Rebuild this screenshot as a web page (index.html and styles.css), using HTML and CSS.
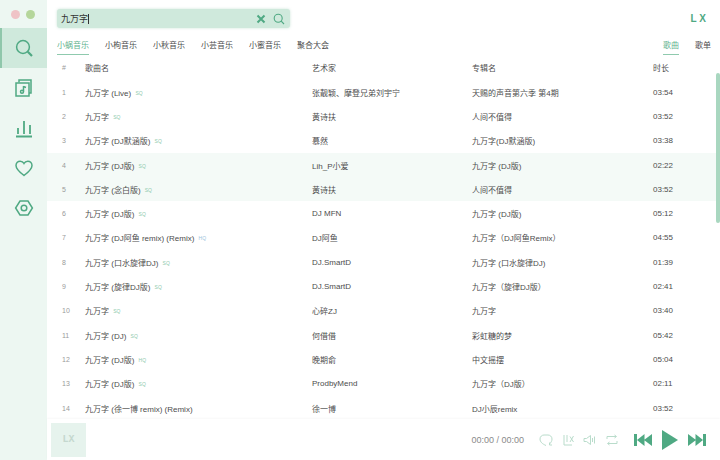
FILE: index.html
```html
<!DOCTYPE html>
<html lang="zh-CN">
<head>
    <meta charset="UTF-8">
    <title>LX Music</title>
    <link rel="stylesheet" href="styles.css">
</head>
<body>
    <div class="app">
        <aside class="sidebar">
            <div class="traffic">
                <span class="dot dot-red"></span>
                <span class="dot dot-green"></span>
            </div>
            <nav class="nav">
                <a class="nav-item active">
                    <svg viewBox="0 0 20 20" width="20" height="20"><circle cx="9" cy="9" r="6.4"/><path d="M13.8 13.8 L18 18" stroke-width="2.2"/></svg>
                </a>
                <a class="nav-item">
                    <svg viewBox="0 0 20 20" width="20" height="20"><path d="M5 4.5 V2 H17 V15 H15"/><rect x="2" y="5" width="13" height="13"/><path d="M9.5 8 V13.5 M9.5 8.5 L12 9.5"/><circle cx="8" cy="13.8" r="1.5"/></svg>
                </a>
                <a class="nav-item">
                    <svg viewBox="0 0 20 20" width="20" height="20"><path d="M2 18.5 H18 M4 16 V10 M10 16 V3 M16 16 V7" stroke-width="1.8"/></svg>
                </a>
                <a class="nav-item">
                    <svg viewBox="0 0 20 20" width="20" height="20"><path d="M10 17.5 C6 14.5 2 11.5 2 7.5 C2 4.8 4 3.2 6.2 3.2 C7.8 3.2 9.2 4 10 5.4 C10.8 4 12.2 3.2 13.8 3.2 C16 3.2 18 4.8 18 7.5 C18 11.5 14 14.5 10 17.5 Z"/></svg>
                </a>
                <a class="nav-item">
                    <svg viewBox="0 0 20 20" width="20" height="20"><path d="M6 3 H14 L18.4 10 L14 17 H6 L1.6 10 Z"/><circle cx="10" cy="10" r="2.8"/></svg>
                </a>
            </nav>
        </aside>

        <main class="main">
            <header class="topbar">
                <div class="search">
                    <span class="search-text">九万字</span>
                    <svg class="search-clear" viewBox="0 0 10 10" width="10" height="10"><path d="M1.5 1.5 L8.5 8.5 M8.5 1.5 L1.5 8.5"/></svg>
                    <svg class="search-go" viewBox="0 0 12 12" width="12" height="12"><circle cx="5.2" cy="5.2" r="4"/><path d="M8.2 8.2 L11 11"/></svg>
                </div>
                <div class="logo">L X</div>
            </header>

            <div class="tabs-row">
                <div class="tabs">
                    <span class="tab active">小蜗音乐</span>
                    <span class="tab">小枸音乐</span>
                    <span class="tab">小秋音乐</span>
                    <span class="tab">小芸音乐</span>
                    <span class="tab">小蜜音乐</span>
                    <span class="tab">聚合大会</span>
                </div>
                <div class="tabs tabs-right">
                    <span class="tab active">歌曲</span>
                    <span class="tab">歌单</span>
                </div>
            </div>

            <div class="list">
                <div class="row head">
                    <span class="num">#</span><span>歌曲名</span><span>艺术家</span><span>专辑名</span><span>时长</span>
                </div>
                <div class="row"><span class="num">1</span><span>九万字 (Live) <i class="q">SQ</i></span><span>张靓颖、摩登兄弟刘宇宁</span><span>天赐的声音第六季 第4期</span><span>03:54</span></div>
                <div class="row"><span class="num">2</span><span>九万字 <i class="q">SQ</i></span><span>黄诗扶</span><span>人间不值得</span><span>03:52</span></div>
                <div class="row"><span class="num">3</span><span>九万字 (DJ默涵版) <i class="q">SQ</i></span><span>慕然</span><span>九万字(DJ默涵版)</span><span>03:38</span></div>
                <div class="row hl"><span class="num">4</span><span>九万字 (DJ版) <i class="q">SQ</i></span><span>Lih_P小爱</span><span>九万字 (DJ版)</span><span>02:22</span></div>
                <div class="row hl"><span class="num">5</span><span>九万字 (念白版) <i class="q">SQ</i></span><span>黄诗扶</span><span>人间不值得</span><span>03:52</span></div>
                <div class="row"><span class="num">6</span><span>九万字 (DJ版) <i class="q">SQ</i></span><span>DJ MFN</span><span>九万字 (DJ版)</span><span>05:12</span></div>
                <div class="row"><span class="num">7</span><span>九万字 (DJ阿鱼 remix) (Remix) <i class="q hq">HQ</i></span><span>DJ阿鱼</span><span>九万字（DJ阿鱼Remix）</span><span>04:55</span></div>
                <div class="row"><span class="num">8</span><span>九万字 (口水旋律DJ) <i class="q">SQ</i></span><span>DJ.SmartD</span><span>九万字 (口水旋律DJ)</span><span>01:39</span></div>
                <div class="row"><span class="num">9</span><span>九万字 (旋律DJ版) <i class="q">SQ</i></span><span>DJ.SmartD</span><span>九万字（旋律DJ版）</span><span>02:41</span></div>
                <div class="row"><span class="num">10</span><span>九万字 <i class="q">SQ</i></span><span>心碎ZJ</span><span>九万字</span><span>03:40</span></div>
                <div class="row"><span class="num">11</span><span>九万字 (DJ) <i class="q">SQ</i></span><span>何借借</span><span>彩虹糖的梦</span><span>05:42</span></div>
                <div class="row"><span class="num">12</span><span>九万字 (DJ版) <i class="q">HQ</i></span><span>晚期俞</span><span>中文摇摆</span><span>05:04</span></div>
                <div class="row"><span class="num">13</span><span>九万字 (DJ版) <i class="q">SQ</i></span><span>ProdbyMend</span><span>九万字（DJ版）</span><span>02:11</span></div>
                <div class="row"><span class="num">14</span><span>九万字 (徐一博 remix) (Remix)</span><span>徐一博</span><span>DJ小辰remix</span><span>03:52</span></div>
                <div class="scrollbar"></div>
            </div>

            <footer class="player">
                <div class="cover">LX</div>
                <div class="time">00:00 / 00:00</div>
                <div class="tools">
                    <svg viewBox="0 0 14 14" width="14" height="14"><path d="M7 12.5 C3.5 11 1 9 1 6 C1 3.5 3 2 5 2 H9 C11 2 13 3.5 13 6 C13 8 12 9.5 10.5 11"/><path d="M10.5 9.5 V12 H13"/></svg>
                    <svg viewBox="0 0 14 14" width="14" height="14"><path d="M3 2 V12 H11 M6 2 V9 M9 9 L12.5 3 M9 3.5 L12.5 9"/></svg>
                    <svg viewBox="0 0 14 14" width="14" height="14"><path d="M1 5.5 V8.5 H3.5 L7.5 11.5 V2.5 L3.5 5.5 Z M9.5 5 V9 M11.5 3.5 V10.5"/></svg>
                    <svg viewBox="0 0 14 14" width="14" height="14"><path d="M2 6 V3.5 H11 M9.5 2 L11.5 3.5 L9.5 5 M12 8 V10.5 H3 M4.5 9 L2.5 10.5 L4.5 12"/></svg>
                </div>
                <div class="controls">
                    <svg viewBox="0 0 18 14" width="18" height="14"><path d="M0 1 H3 V13 H0 Z M3 7 L10.5 1 V13 Z M10 7 L18 1 V13 Z"/></svg>
                    <svg viewBox="0 0 16 20" width="16" height="20"><path d="M0 0 L16 10 L0 20 Z"/></svg>
                    <svg viewBox="0 0 18 14" width="18" height="14"><path d="M18 1 H15 V13 H18 Z M15 7 L7.5 1 V13 Z M8 7 L0 1 V13 Z"/></svg>
                </div>
            </footer>
        </main>
    </div>
</body>
</html>
```

FILE: styles.css
```css
:root {
    --green: #4fa983;
    --green-soft: #8fcaae;
    --side: #edf7f2;
    --text: #4d4d4d;
    --muted: #9a9a9a;
}

* {
    margin: 0;
    padding: 0;
    box-sizing: border-box;
}

body {
    width: 720px;
    height: 460px;
    overflow: hidden;
    font-family: "Liberation Sans", "Noto Sans CJK SC", sans-serif;
    font-size: 8px;
    color: var(--text);
    background: white;
}

.app {
    display: flex;
    height: 460px;
}

.sidebar {
    width: 47px;
    flex-shrink: 0;
    background: var(--side);
}

.traffic {
    display: flex;
    gap: 6px;
    height: 28px;
    padding: 10px 0 0 11px;
}

.dot {
    width: 9px;
    height: 9px;
    border-radius: 50%;
}

.dot-red {
    background: #efc3c6;
}

.dot-green {
    background: #b5d69b;
}

.nav-item {
    display: flex;
    align-items: center;
    justify-content: center;
    height: 40px;
    border-left: 2px solid transparent;
    padding-right: 2px;
}

.nav-item.active {
    background: #cfe9dc;
    border-left-color: #8fc7ab;
}

.nav-item svg {
    fill: none;
    stroke: var(--green);
    stroke-width: 1.5;
}

.main {
    flex: 1;
    display: flex;
    flex-direction: column;
    min-width: 0;
}

.topbar {
    display: flex;
    align-items: center;
    justify-content: space-between;
    height: 37px;
    padding: 0 14px 0 10px;
}

.search {
    display: flex;
    align-items: center;
    width: 233px;
    height: 19px;
    padding: 0 5px 0 4px;
    background: #cfe9dc;
    border-radius: 3px;
    box-shadow: 0 0 3px rgba(130, 190, 160, 0.4);
}

.search-text {
    flex: 1;
    font-size: 9px;
    color: #333;
}

.search-text::after {
    content: "";
    display: inline-block;
    width: 1px;
    height: 10px;
    margin-left: 0;
    vertical-align: -2px;
    background: #333;
}

.search svg {
    fill: none;
    stroke: var(--green);
}

.search-clear {
    stroke-width: 2;
    margin-right: 7px;
}

.search-go {
    stroke-width: 1.1;
}

.logo {
    font-size: 10px;
    font-weight: bold;
    color: var(--green);
}

.tabs-row {
    display: flex;
    justify-content: space-between;
    height: 18px;
    padding: 0 9px 0 10px;
}

.tabs {
    display: flex;
    gap: 16px;
}

.tabs-right {
    gap: 16px;
}

.tab {
    height: 18px;
    padding-top: 2px;
    white-space: nowrap;
    font-size: 8px;
}

.tab.active {
    color: #5fb38e;
    border-bottom: 1px solid #8fcaae;
}

.list {
    position: relative;
    flex: 1;
    min-height: 0;
    overflow: hidden;
}

.row {
    display: grid;
    grid-template-columns: 38px 227px 160px 181px 1fr;
    align-items: center;
    height: 24.3px;
    white-space: nowrap;
}

.row span:first-child {
    padding-left: 15px;
}

.head {
    height: 25px;
}

.hl {
    background: #f4faf7;
}

.num {
    color: var(--muted);
    font-size: 7px;
}

.q {
    margin-left: 2px;
    font-style: normal;
    font-size: 5px;
    color: #8fcaae;
    vertical-align: 1px;
}

.hq {
    color: #9cc4dc;
}

.scrollbar {
    position: absolute;
    top: 18px;
    right: 0;
    width: 4px;
    height: 150px;
    background: #a9d7c0;
    border-radius: 2px;
}

.player {
    display: flex;
    align-items: center;
    height: 41px;
    flex-shrink: 0;
    padding: 0 14px 0 4px;
    box-shadow: 0 -1px 2px rgba(0, 0, 0, 0.03);
}

.cover {
    width: 35px;
    height: 34px;
    display: flex;
    align-items: center;
    justify-content: center;
    background: #e6f3ed;
    color: #c5d8cf;
    font-family: "Liberation Mono", monospace;
    font-size: 10px;
    font-weight: bold;
}

.time {
    margin-left: auto;
    margin-right: 15px;
    font-size: 9px;
    color: #8a8a8a;
}

.tools {
    display: flex;
    gap: 8px;
    margin-right: 15px;
}

.tools svg {
    fill: none;
    stroke: #b9dccb;
    stroke-width: 1;
}

.controls {
    display: flex;
    align-items: center;
    gap: 10px;
}

.controls svg {
    fill: var(--green);
}
```
